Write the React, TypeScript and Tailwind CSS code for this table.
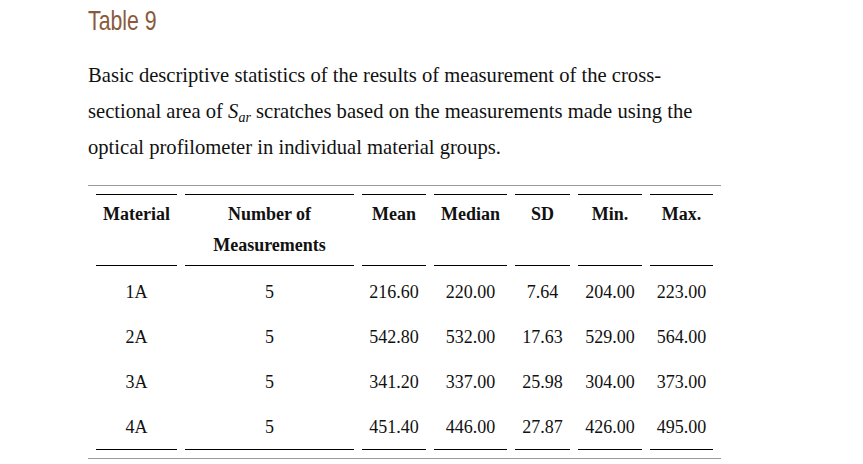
const rows = [
  ["1A", "5", "216.60", "220.00", "7.64", "204.00", "223.00"],
  ["2A", "5", "542.80", "532.00", "17.63", "529.00", "564.00"],
  ["3A", "5", "341.20", "337.00", "25.98", "304.00", "373.00"],
  ["4A", "5", "451.40", "446.00", "27.87", "426.00", "495.00"],
];

const widths = ["w-[81px]", "w-[169px]", "w-[64px]", "w-[73px]", "w-[55px]", "w-[64px]", "w-[63px]"];

export default function App() {
  return (
    <div className="min-h-screen bg-white pl-[88px] pt-[4px] text-[#111]">
      <h2 className="inline-block origin-left scale-x-[0.76] font-['Liberation_Sans',sans-serif] text-[28px] leading-[34px] text-[#8a5a3e]">
        Table 9
      </h2>
      <p className="mt-[19px] w-[612px] font-['Liberation_Serif',serif] text-[20.6px] leading-[36px]">
        Basic descriptive statistics of the results of measurement of the cross-sectional area of{" "}
        <i>S</i>
        <sub className="text-[14px] italic leading-none">ar</sub> scratches based on the measurements made using the
        optical profilometer in individual material groups.
      </p>
      <table className="mt-[20px] border-separate border-spacing-2 border-y border-[#999] font-['Liberation_Serif',serif] text-[18px]">
        <thead>
          <tr>
            <th className={`${widths[0]} border-y border-black px-0 py-1 align-top leading-[31px]`}>Material</th>
            <th className={`${widths[1]} border-y border-black px-0 py-1 align-top leading-[31px]`}>
              Number of
              <br />
              Measurements
            </th>
            {["Mean", "Median", "SD", "Min.", "Max."].map((h, i) => (
              <th key={h} className={`${widths[i + 2]} border-y border-black px-0 py-1 align-top leading-[31px]`}>
                {h}
              </th>
            ))}
          </tr>
        </thead>
        <tbody>
          {rows.map((r, ri) => {
            const last = ri === rows.length - 1;
            return (
              <tr key={r[0]}>
                {r.map((v, ci) => (
                  <td
                    key={ci}
                    className={
                      last
                        ? "h-[41px] border-b border-black p-0 pb-1 text-center align-middle"
                        : "h-[37px] p-0 text-center align-middle"
                    }
                  >
                    {v}
                  </td>
                ))}
              </tr>
            );
          })}
        </tbody>
      </table>
    </div>
  );
}
